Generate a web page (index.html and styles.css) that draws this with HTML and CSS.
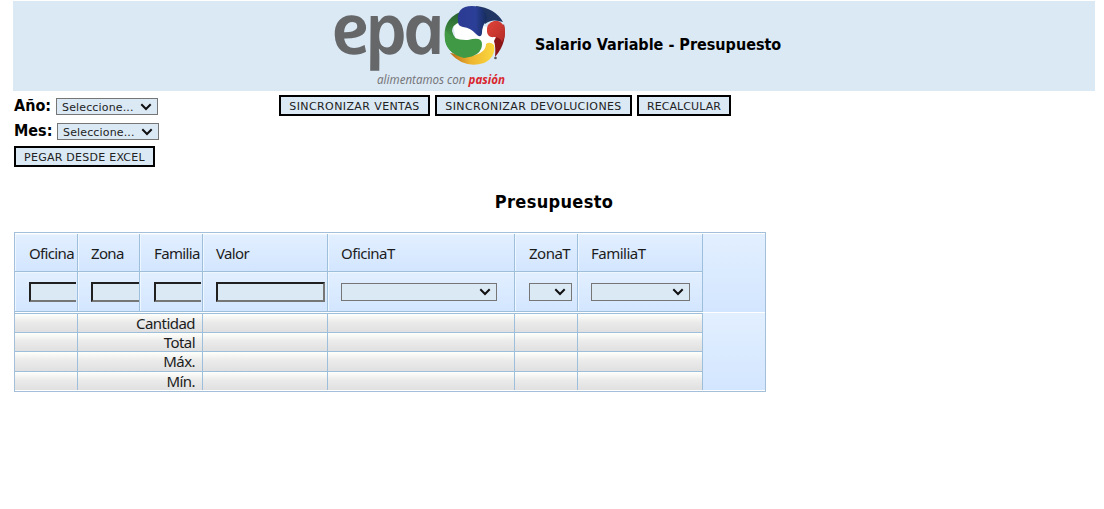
FILE: index.html
```html
<!DOCTYPE html>
<html lang="es">
<head>
<meta charset="utf-8">
<title>Salario Variable - Presupuesto</title>
<link rel="stylesheet" href="styles.css">
</head>
<body>
<header class="banner">
  <svg class="logo" viewBox="330 0 180 90" width="180" height="90" role="img" aria-label="epa">
    <defs>
      <linearGradient id="green" x1="0" y1="0" x2="0" y2="1"><stop offset="0" stop-color="#27602e"/><stop offset=".5" stop-color="#3c8c41"/><stop offset="1" stop-color="#3fa047"/></linearGradient>
      <linearGradient id="red" x1="0" y1="0" x2="1" y2="1"><stop offset="0" stop-color="#e04437"/><stop offset="1" stop-color="#b52c29"/></linearGradient>
      <linearGradient id="gold" x1="0" y1="0" x2="1" y2="0"><stop offset="0" stop-color="#b86b18"/><stop offset=".45" stop-color="#edb42f"/><stop offset="1" stop-color="#fbd83f"/></linearGradient>
      <linearGradient id="navy" x1="0" y1="0" x2="1" y2="0"><stop offset="0" stop-color="#2c3a92"/><stop offset=".6" stop-color="#2b3f98"/><stop offset="1" stop-color="#152c5b"/></linearGradient>
    </defs>
    <text class="logo-name" transform="translate(335 54) skewX(12) scale(1.04 1)" x="0" y="0">epa</text>
    <path d="M453 24L459 20L487 27L502 37L495 46L486 58L468 49L456 41Z" fill="#fff"/>
    <path d="M460 12Q442 20 445 40Q446 48 453 53L465 46Q454 40 452 31Q452 25 460 22Z" fill="url(#green)"/>
    <path d="M450 53Q464 69 484 63Q496 57 494 45Q490 41 486 44Q486 53 471 56Z" fill="url(#gold)"/>
    <path d="M445 30Q454 41 468 40Q482 36 482 44Q482 56 464 58Q448 54 445 40Z" fill="#409a45"/>
    <path d="M496 37L504 24Q508 42 495 57Q496 47 494 41Z" fill="#8b1517"/>
    <path d="M487 32Q486 23 494 21Q500 20 504 26Q507 34 502 42Q500 37 494 37Q488 38 487 32Z" fill="url(#red)"/>
    <path d="M476 6Q495 8 503 22Q492 18 485 24L479 17Z" fill="#203563"/>
    <path d="M458 22Q456 6 472 6Q486 6 487 19Q482 26 482 33Q481 39 476 34Q471 28 463 27Q458 26 458 22Z" fill="url(#navy)"/>
    <circle cx="495.500" cy="58" r="1.300" fill="#555"/>
    <text class="logo-line" x="377" y="84" textLength="128" lengthAdjust="spacingAndGlyphs">alimentamos con <tspan class="logo-strong">pasión</tspan></text>
  </svg>
  <h1 class="title">Salario Variable - Presupuesto</h1>
</header>
<section class="controls">
  <div class="filters">
    <div class="filter-row"><label class="label label-year" for="y">Año:</label><select class="select" id="y"><option>Seleccione...</option></select></div>
    <div class="filter-row"><label class="label label-month" for="m">Mes:</label><select class="select" id="m"><option>Seleccione...</option></select></div>
    <button class="btn btn-paste">PEGAR DESDE EXCEL</button>
  </div>
  <div class="actions">
    <button class="btn btn-sales">SINCRONIZAR VENTAS</button>
    <button class="btn btn-returns">SINCRONIZAR DEVOLUCIONES</button>
    <button class="btn btn-recalc">RECALCULAR</button>
  </div>
</section>
<h2 class="subtitle"><span class="subtitle-text">Presupuesto</span></h2>
<main class="grid">
  <div class="head">
    <div class="row head-row">
      <div class="cell wide-pad"><span>Oficina</span></div><div class="cell"><span>Zona</span></div><div class="cell wide-pad"><span>Familia</span></div><div class="cell"><span>Valor</span></div><div class="cell"><span>OficinaT</span></div><div class="cell wide-pad"><span>ZonaT</span></div><div class="cell"><span>FamiliaT</span></div>
    </div>
    <div class="row filter-cells">
      <div class="cell wide-pad"><div class="clip"><input class="input"></div></div><div class="cell"><div class="clip"><input class="input"></div></div><div class="cell wide-pad"><div class="clip"><input class="input"></div></div><div class="cell"><input class="input"></div><div class="cell"><select class="select pick-office"></select></div><div class="cell wide-pad"><select class="select pick-zone"></select></div><div class="cell"><select class="select pick-family"></select></div>
    </div>
  </div>
  <div class="foot">
    <div class="row sum"><div class="cell"></div><div class="cell total">Cantidad</div><div class="cell"></div><div class="cell"></div><div class="cell"></div><div class="cell"></div></div>
    <div class="row sum"><div class="cell"></div><div class="cell total">Total</div><div class="cell"></div><div class="cell"></div><div class="cell"></div><div class="cell"></div></div>
    <div class="row sum tall"><div class="cell"></div><div class="cell total">Máx.</div><div class="cell"></div><div class="cell"></div><div class="cell"></div><div class="cell"></div></div>
    <div class="row sum"><div class="cell"></div><div class="cell total">Mín.</div><div class="cell"></div><div class="cell"></div><div class="cell"></div><div class="cell"></div></div>
  </div>
</main>
</body>
</html>
```
FILE: styles.css
```css
* { box-sizing: border-box; }
body { margin: 0; background: #fff; color: #000; font-family: "Noto Sans", sans-serif; overflow: hidden; }
.banner { margin: 1px 9px 0 13px; height: 90px; background: #dbe9f5; display: flex; padding-left: 317px; }
.logo { margin-top: -1px; flex: none; overflow: visible; }
.logo-name { font: italic 600 70px "Noto Sans", sans-serif; letter-spacing: -5px; fill: #666769; }
.logo-line { font: italic 400 12px "Noto Sans", sans-serif; fill: #77777a; }
.logo-strong { font-weight: 700; fill: #d9272e; }
.title { margin: 34px 0 0 25px; font: bold 16px/20px "DejaVu Sans Condensed", "DejaVu Sans", sans-serif; font-stretch: condensed; white-space: nowrap; letter-spacing: 0; }
.controls { display: flex; padding-left: 14px; height: 78px; }
.filters { width: 265px; padding-top: 2px; }
.filter-row { display: flex; height: 25px; align-items: center; }
.label { font: bold 16px/24px "DejaVu Sans Condensed", "DejaVu Sans", sans-serif; font-stretch: condensed; white-space: nowrap; letter-spacing: 0; }
.label-year { width: 42px; }
.label-month { width: 43px; }
.select { appearance: none; margin: 2px 0 0; width: 102px; height: 17px; padding: 1px 0 0 5px; border: 1px solid #767676; border-radius: 0; background: #dbe9f5 url("data:image/svg+xml,%3Csvg xmlns='http://www.w3.org/2000/svg' width='12' height='8'%3E%3Cpath d='M1.300 1.300L6 6L10.700 1.300' fill='none' stroke='%23101010' stroke-width='2'/%3E%3C/svg%3E") no-repeat right 5px center; color: #222; font: 11px "DejaVu Sans", sans-serif; letter-spacing: 0.15px; }
.btn { display: block; height: 21px; padding: 2px 0 0; border: 2px solid #000; border-radius: 0; background: #dbe9f5; color: #222; font: 11px/15px "DejaVu Sans", sans-serif; white-space: nowrap; }
.btn-paste { width: 141px; margin-top: 3px; letter-spacing: 0.25px; }
.actions { display: flex; gap: 5px; padding-top: 4px; }
.btn-sales { width: 151px; letter-spacing: 0.4px; }
.btn-returns { width: 197px; letter-spacing: 0.4px; }
.btn-recalc { width: 94px; letter-spacing: 0.1px; }
.subtitle { width: 1080px; margin: 21px 0 0 14px; text-align: center; font: bold 18px/24px "DejaVu Sans Condensed", "DejaVu Sans", sans-serif; font-stretch: condensed; letter-spacing: 0.35px; }
.grid { width: 752px; height: 160px; margin: 18px 0 0 14px; border: 1px solid #a3bfd9; padding: 1px 0; }
.head { height: 78px; background: linear-gradient(#e2efff, #d3e6ff); }
.row { display: grid; grid-template-columns: 63px 62px 63px 125px 187px 63px 125px; width: 688px; }
.head .cell { background: linear-gradient(#e2efff, #d3e6ff); border-right: 1px solid #9ebfdb; border-bottom: 1px solid #9ebfdb; padding-left: 13px; overflow: hidden; box-shadow: inset 1px 1px #eef6ff; font-size: 15px; line-height: 39px; white-space: nowrap; color: #1c1c1c; }
.head .cell.wide-pad { padding-left: 14px; }
.head .cell span { letter-spacing: -0.65px; }
.head .cell:nth-child(n+5) span { letter-spacing: -0.5px; }
.head-row .cell { height: 38px; }
.filter-cells .cell { height: 40px; display: flex; padding-top: 10px; }
.clip { width: 47px; height: 20px; overflow: hidden; display: flex; }
.cell:nth-child(2) .clip { width: 48px; }
.input { flex: none; width: 109px; height: 20px; margin: 0; padding: 0; background: #dbe9f5; border: 2px solid; border-color: #202020 #767676 #767676 #202020; border-radius: 0; }
.filter-cells .select { margin-top: 1px; height: 18px; }
.filter-cells .pick-office { width: 156px; }
.filter-cells .pick-zone { width: 43px; }
.filter-cells .pick-family { width: 99px; }
.foot { margin-top: 1px; height: 77px; background: linear-gradient(#e2efff, #d3e6ff); }
.sum { grid-template-columns: 63px 125px 125px 187px 63px 125px; grid-template-rows: 100%; height: 19px; border-top: 1px solid #9ebfdb; }
.sum.tall { height: 20px; }
.sum .cell { border-right: 1px solid #9ebfdb; background: linear-gradient(#fffffb, #ebebeb 45%, #e0e0e0); padding-right: 7px; text-align: right; font-size: 15px; line-height: 18px; color: #1c1c1c; letter-spacing: -0.55px; }
```
